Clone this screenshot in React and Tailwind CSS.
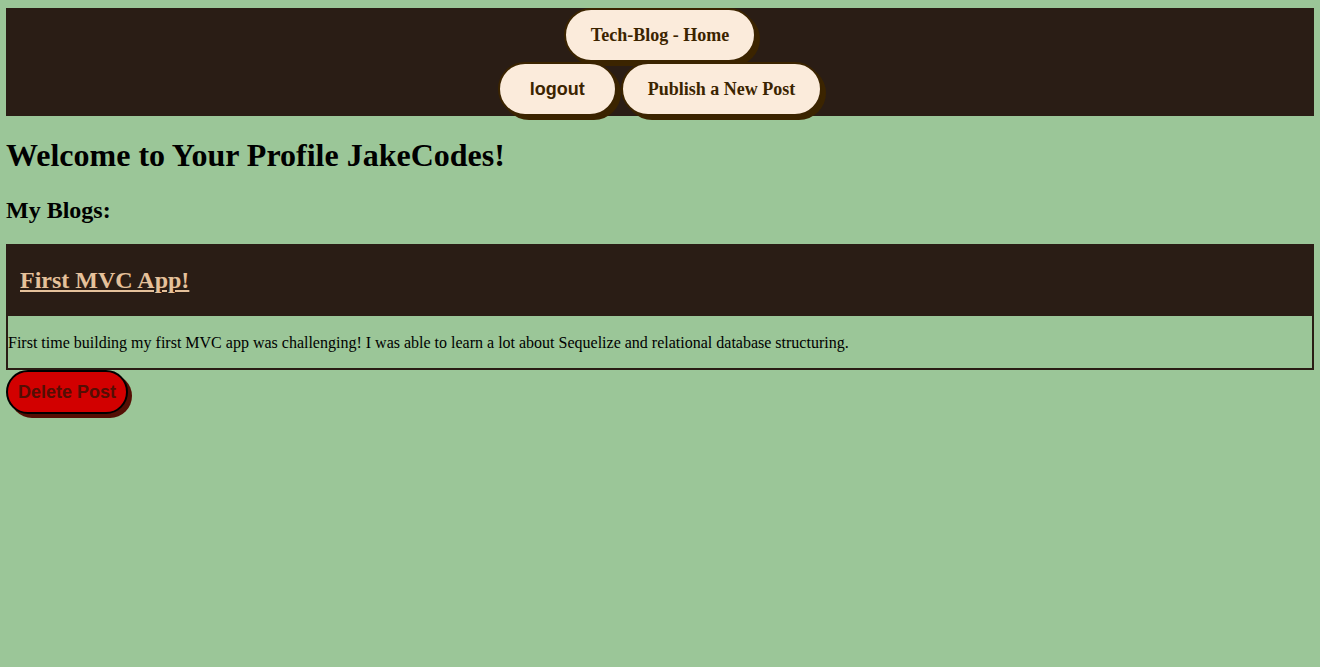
const pill =
  'flex h-[54px] items-center justify-center rounded-full border-2 border-[#3b2400] bg-[#fbebdb] text-[18px] font-bold leading-5 text-[#3b2400] shadow-[4px_4px_0_#3b2400]';

function Header() {
  return (
    <header className="bg-[#2a1d15]">
      <nav className="flex flex-col items-center">
        <a href="#home" className={`${pill} px-[25px]`}>
          Tech-Blog - Home
        </a>
        <div className="flex gap-1">
          <button type="button" className={`${pill} px-[30px] font-['Liberation_Sans',Arial,sans-serif]`}>
            logout
          </button>
          <a href="#new-post" className={`${pill} px-[25px]`}>
            Publish a New Post
          </a>
        </div>
      </nav>
    </header>
  );
}

function Post({ title, children }) {
  return (
    <article>
      <div className="border-2 border-[#2a1d15]">
        <h2 className="bg-[#2a1d15] px-3 pt-5 pb-[22px] text-2xl leading-7 font-bold text-[#e5c19b]">
          <a href="#post" className="underline">
            {title}
          </a>
        </h2>
        <p className="pt-[17px] pb-[15px] text-base leading-5">{children}</p>
      </div>
      <button
        type="button"
        className="h-11 rounded-full border-2 border-black bg-[#d20000] px-[10px] font-['Liberation_Sans',Arial,sans-serif] text-[18px] leading-5 font-bold text-[#540e04] shadow-[4px_4px_0_#540e04]"
      >
        Delete Post
      </button>
    </article>
  );
}

export default function App() {
  return (
    <div className="min-h-screen bg-[#9bc698] px-[6px] py-2 font-['Liberation_Serif','Times_New_Roman',serif] text-black">
      <Header />
      <main>
        <h1 className="mt-[21px] text-[32px] leading-9 font-bold">Welcome to Your Profile JakeCodes!</h1>
        <h2 className="mt-[23px] mb-5 text-2xl leading-7 font-bold">My Blogs:</h2>
        <Post title="First MVC App!">
          First time building my first MVC app was challenging! I was able to learn a lot about Sequelize and
          relational database structuring.
        </Post>
      </main>
    </div>
  );
}
